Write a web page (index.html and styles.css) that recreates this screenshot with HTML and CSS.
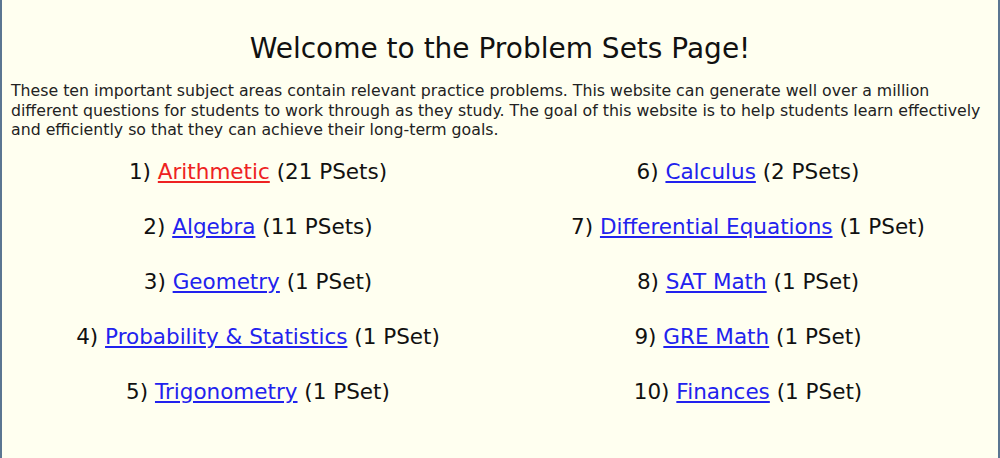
FILE: index.html
```html
<!DOCTYPE html>
<html lang="en">
<head>
  <meta charset="UTF-8">
  <title>Problem Sets</title>
  <link rel="stylesheet" href="styles.css">
</head>
<body>
  <div class="page">
    <h1 class="title">Welcome to the Problem Sets Page!</h1>
    <p class="intro">These ten important subject areas contain relevant practice problems. This website can generate well over a million different questions for students to work through as they study. The goal of this website is to help students learn effectively and efficiently so that they can achieve their long-term goals.</p>

    <div class="subjects">
      <div class="subject">1) <a href="#" class="visited">Arithmetic</a> (21 PSets)</div>
      <div class="subject">6) <a href="#">Calculus</a> (2 PSets)</div>
      <div class="subject">2) <a href="#">Algebra</a> (11 PSets)</div>
      <div class="subject">7) <a href="#">Differential Equations</a> (1 PSet)</div>
      <div class="subject">3) <a href="#">Geometry</a> (1 PSet)</div>
      <div class="subject">8) <a href="#">SAT Math</a> (1 PSet)</div>
      <div class="subject">4) <a href="#">Probability &amp; Statistics</a> (1 PSet)</div>
      <div class="subject">9) <a href="#">GRE Math</a> (1 PSet)</div>
      <div class="subject">5) <a href="#">Trigonometry</a> (1 PSet)</div>
      <div class="subject">10) <a href="#">Finances</a> (1 PSet)</div>
    </div>
  </div>
</body>
</html>
```

FILE: styles.css
```css
html, body {
  margin: 0;
  height: 100%;
}

body {
  background: #fffff0;
  font-family: "DejaVu Sans", Verdana, sans-serif;
  color: #111;
}

.page {
  box-sizing: border-box;
  min-height: 100%;
  border-left: 2px solid #5b7691;
  border-right: 2px solid #5b7691;
  padding: 0 9px;
}

.title {
  margin: 0;
  padding-top: 31px;
  font-size: 28px;
  font-weight: normal;
  text-align: center;
  line-height: 36px;
}

.intro {
  margin: 14px 0 0;
  font-size: 15.75px;
  line-height: 19.5px;
  color: #222;
}

.subjects {
  display: grid;
  grid-template-columns: 1fr 1fr;
  row-gap: 27px;
  margin: 18px -4px 0 0;
  padding-left: 2px;
  font-size: 21.5px;
  line-height: 28px;
}

.subject {
  text-align: center;
}

.subject a {
  color: #2222ee;
}

.subject a.visited {
  color: #ee2222;
}
```
